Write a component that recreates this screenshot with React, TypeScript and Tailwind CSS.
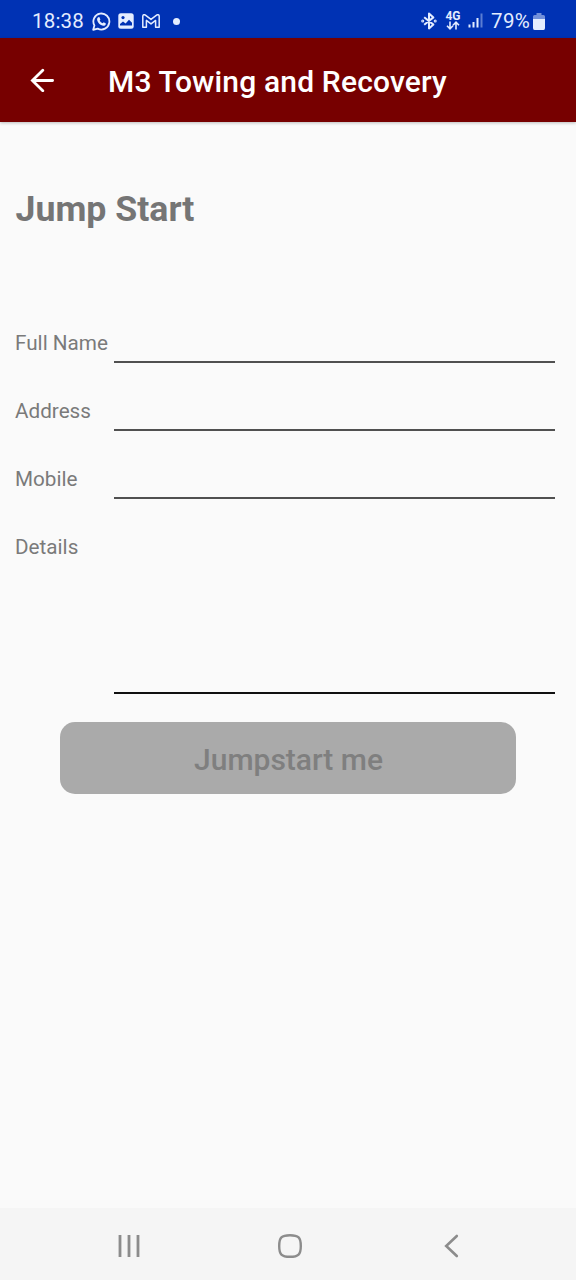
import React from 'react';

const fields = [
  { id: 'fullName', label: 'Full Name' },
  { id: 'address', label: 'Address' },
  { id: 'mobile', label: 'Mobile' },
];

const StatusBar: React.FC = () => (
  <div className="flex h-[38px] shrink-0 items-center bg-[#0032b4] pt-1 pl-[32px] pr-[31px] text-[#e4edff]">
    <span className="w-[60px] text-[20.5px] leading-none tracking-[0.2px]">18:38</span>
    <svg className="h-[19px] w-[19px]" viewBox="0 0 19 19" fill="none">
      <path d="M1.2 17.8 2.4 13.4A8 8 0 1 1 5.7 16.6Z" stroke="currentColor" strokeWidth="1.8" strokeLinejoin="round" />
      <path d="M6.2 5.3 7.3 5.1 8.4 7.4 7.7 8.5C8.4 9.9 9.3 10.7 10.7 11.3L11.7 10.3 13.9 11.4C13.9 13 12.6 13.9 11.4 13.8 8.2 13.4 5.5 10.6 5.1 7.8 5 6.7 5.5 5.8 6.2 5.3Z" fill="currentColor" />
    </svg>
    <svg className="ml-[7px] h-4 w-4" viewBox="0 0 16 16">
      <rect x="0.3" y="0.3" width="15.4" height="15.4" rx="2.5" fill="currentColor" />
      <path d="M2 12.5V11L5 8.5 7.6 10.4 11 6.8 14 9.8V12.5Z" fill="#0032b4" />
      <circle cx="5" cy="4.6" r="1.6" fill="#0032b4" />
    </svg>
    <svg className="ml-2 h-[14px] w-[18px]" viewBox="0 0 18 14" fill="none" stroke="currentColor" strokeWidth="1.5" strokeLinejoin="round">
      <path d="M.8 13.2V2.2C.8.6 2.4.3 3.4 1.1L9 5.4 14.6 1.1C15.6.3 17.2.6 17.2 2.2V13.2H13.6V6.4L9 9.9 4.4 6.4V13.2Z" />
    </svg>
    <span className="ml-[13px] h-[7px] w-[7px] rounded-full bg-current" />

    <svg className="ml-auto h-[18px] w-4" viewBox="0 0 16 18" fill="none" stroke="currentColor" strokeWidth="2" strokeLinejoin="round">
      <path d="M3.2 5.2 12.4 12.6 8 16.4V1.6L12.4 5.4 3.2 12.8" />
      <circle cx="1.7" cy="9" r="0.5" fill="currentColor" />
      <circle cx="14.2" cy="9" r="0.5" fill="currentColor" />
    </svg>
    <div className="ml-2 flex w-4 flex-col items-center">
      <span className="text-[12px] leading-[9px] font-bold">4G</span>
      <svg className="h-[9px] w-[14px]" viewBox="0 0 14 9" fill="none" stroke="currentColor" strokeWidth="1.6">
        <path d="M4 .5V7.5M1 4.8 4 7.8 7 4.8M10 8.5V1.5M7 4.2 10 1.2 13 4.2" />
      </svg>
    </div>
    <svg className="ml-[7px] h-4 w-4" viewBox="0 0 16 16" fill="currentColor">
      <rect x="0.5" y="11.5" width="2" height="3" />
      <rect x="4.5" y="9" width="2" height="5.5" />
      <rect x="8.5" y="5" width="2" height="9.5" />
      <rect x="12.5" y="0.5" width="2" height="14" opacity="0.4" />
    </svg>
    <span className="ml-[7px] w-[42px] text-[20.5px] leading-none tracking-[0.4px]">79%</span>
    <svg className="h-[17px] w-[12px]" viewBox="0 0 12 17" fill="currentColor">
      <path d="M3.5 0H8.5V2H10.5Q12 2 12 3.5V6H0V3.5Q0 2 1.5 2H3.5Z" opacity="0.5" />
      <path d="M0 6H12V15Q12 17 10.5 17H1.5Q0 17 0 15Z" />
    </svg>
  </div>
);

const Header: React.FC = () => (
  <header className="z-10 flex h-[84px] shrink-0 items-center bg-[#770000] pl-[30px] text-white shadow-[0_1px_3px_rgba(0,0,0,0.25)]">
    <button aria-label="Back">
      <svg className="h-6 w-6" viewBox="0 0 24 24" fill="none" stroke="currentColor" strokeWidth="2.8" strokeLinecap="round">
        <path d="M22.6 12.5H2.6M12.8 2.2 2.4 12.5 12.8 22.8" />
      </svg>
    </button>
    <h1 className="ml-[54px] pt-[3px] text-[30px] leading-none font-medium tracking-[0.16px] whitespace-nowrap">M3 Towing and Recovery</h1>
  </header>
);

const NavigationBar: React.FC = () => (
  <nav className="flex h-[72px] shrink-0 items-center bg-[#f5f5f5] pt-1 pl-[118px] text-[#8c8c8c]">
    <button aria-label="Recent apps">
      <svg className="h-[22px] w-[22px]" viewBox="0 0 22 22" fill="none" stroke="currentColor" strokeWidth="2.8">
        <path d="M2 0V22M11 0V22M20 0V22" />
      </svg>
    </button>
    <button aria-label="Home" className="ml-[138px]">
      <svg className="h-6 w-6" viewBox="0 0 24 24" fill="none" stroke="currentColor" strokeWidth="2.4">
        <path d="M12 1.2C20.5 1.2 22.8 3.5 22.8 12S20.5 22.8 12 22.8 1.2 20.5 1.2 12 3.5 1.2 12 1.2Z" />
      </svg>
    </button>
    <button aria-label="Back" className="ml-[142px]">
      <svg className="h-6 w-[15px]" viewBox="0 0 15 24" fill="none" stroke="currentColor" strokeWidth="2.6" strokeLinecap="round">
        <path d="M12.8 2 2.2 12 12.8 22" />
      </svg>
    </button>
  </nav>
);

const App: React.FC = () => {
  return (
    <div className="flex h-screen w-full flex-col bg-[#fafafa] font-['Roboto','Liberation_Sans',sans-serif]">
      <StatusBar />
      <Header />
      <main className="flex-1">
        <h2 className="mt-[64px] ml-[15.5px] text-[35.7px] leading-[46px] font-bold text-[#757575]">Jump Start</h2>
        <form className="mt-[62px]">
          {fields.map(({ id, label }) => (
            <div key={id} className="flex h-[68px] pr-[21px] pl-[15px]">
              <label htmlFor={id} className="w-[99px] pt-[37px] text-[20.7px] leading-6 whitespace-nowrap text-[#7a7a7a]">
                {label}
              </label>
              <input id={id} className="h-[69px] min-w-0 flex-1 border-b-2 border-[#505050] bg-transparent text-[21px] outline-none" />
            </div>
          ))}
          <div className="flex h-[196px] pr-[21px] pl-[15px]">
            <label htmlFor="details" className="w-[99px] pt-[37px] text-[20.7px] leading-6 text-[#7a7a7a]">
              Details
            </label>
            <textarea id="details" className="min-w-0 flex-1 resize-none border-b-2 border-[#101010] bg-transparent text-[21px] outline-none" />
          </div>
          <button
            type="button"
            disabled
            className="mx-auto mt-7 block h-[72px] w-[456px] rounded-[15px] bg-[#aaaaaa] pt-0.5 pl-px text-[30px] font-medium text-[#7f7f7f]"
          >
            Jumpstart me
          </button>
        </form>
      </main>
      <NavigationBar />
    </div>
  );
};

export default App;
